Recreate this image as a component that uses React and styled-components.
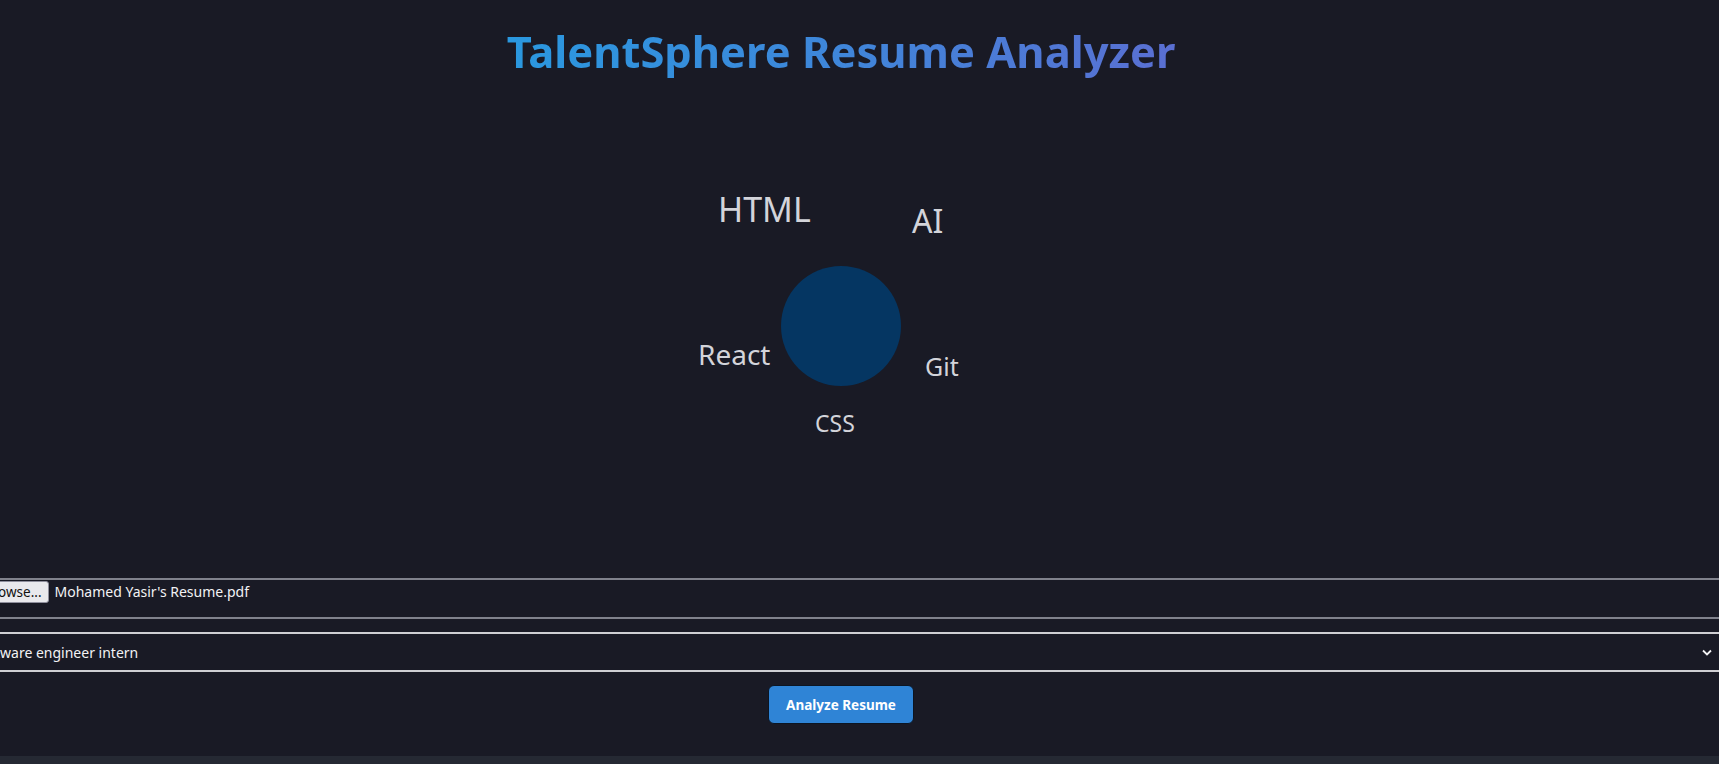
import React from "react";
import styled, { createGlobalStyle } from "styled-components";

const Global = createGlobalStyle`
  html, body {
    margin: 0;
    padding: 0;
    background: #252933;
    overflow: hidden;
  }
  body {
    font-family: "Noto Sans", "Open Sans", sans-serif;
  }
`;

const Page = styled.div`
  height: 756px;
  background: #191a25;
`;

const Main = styled.main`
  width: 1682px;
  display: flex;
  flex-direction: column;
  align-items: center;
`;

const Title = styled.h1`
  margin: 21px 0 0;
  font-size: 43.5px;
  font-weight: 700;
  line-height: normal;
  background: linear-gradient(90deg, #2a98df 0%, #3f86da 50%, #5a6fd2 100%);
  -webkit-background-clip: text;
  background-clip: text;
  color: transparent;
`;

const Stage = styled.div`
  position: relative;
  margin-top: 80px;
  width: 400px;
  height: 300px;
`;

const Core = styled.div`
  position: absolute;
  left: 140px;
  top: 105px;
  width: 120px;
  height: 120px;
  border-radius: 50%;
  background: #053662;
`;

const Skill = styled.span`
  position: absolute;
  line-height: 1;
  white-space: nowrap;
  color: #d3d4da;
  font-size: ${(p) => p.$size}px;
`;

const FormBlock = styled.div`
  align-self: stretch;
  margin: 117px -48px 0 -30px;
  display: flex;
  flex-direction: column;
  gap: 13px;
`;

const FileField = styled.div`
  height: 36px;
  border-top: 2px solid #80828c;
  border-bottom: 2px solid #80828c;
  display: flex;
  align-items: flex-start;
  gap: 6px;
  padding: 1px 0 0 7px;
  box-sizing: content-box;
`;

const BrowseButton = styled.button`
  height: 22px;
  padding: 0 6px;
  margin: 0;
  background: #e9e9ed;
  color: #111;
  border: 1px solid #8f8f9d;
  border-radius: 3px;
  font-family: "Noto Sans", sans-serif;
  font-size: 13.5px;
  line-height: 20px;
`;

const FileName = styled.span`
  color: #f2f2f4;
  font-size: 14px;
  line-height: 22px;
`;

const SelectBox = styled.div`
  height: 36px;
  border-top: 2px solid #cfcfd3;
  border-bottom: 2px solid #cfcfd3;
  display: flex;
  align-items: center;
  justify-content: space-between;
  padding: 0 18px 0 4px;
  color: #f2f2f4;
  font-size: 14px;
`;

const AnalyzeButton = styled.button`
  margin-top: 13px;
  width: 146px;
  height: 39px;
  background: #2f84d6;
  color: #fff;
  border: 1px solid #0c1522;
  border-radius: 6px;
  font-family: "Noto Sans", sans-serif;
  font-weight: 700;
  font-size: 13.5px;
`;

const skills = [
  { name: "HTML", size: 34, left: 77, top: 31 },
  { name: "AI", size: 32, left: 271, top: 44 },
  { name: "React", size: 28, left: 57, top: 179 },
  { name: "Git", size: 25, left: 284, top: 193 },
  { name: "CSS", size: 23, left: 174, top: 251 },
];

export default function App() {
  return (
    <>
      <Global />
      <Page>
        <Main>
          <Title>TalentSphere Resume Analyzer</Title>
          <Stage>
            <Core />
            {skills.map((s) => (
              <Skill key={s.name} $size={s.size} style={{ left: s.left, top: s.top }}>
                {s.name}
              </Skill>
            ))}
          </Stage>
          <FormBlock>
            <FileField>
              <BrowseButton>Browse...</BrowseButton>
              <FileName>Mohamed Yasir's Resume.pdf</FileName>
            </FileField>
            <SelectBox>
              <span>Software engineer intern</span>
              <svg width="10" height="7" viewBox="0 0 10 7">
                <path d="M1 1.5 L5 5.5 L9 1.5" fill="none" stroke="#f2f2f4" strokeWidth="1.8" />
              </svg>
            </SelectBox>
          </FormBlock>
          <AnalyzeButton>Analyze Resume</AnalyzeButton>
        </Main>
      </Page>
    </>
  );
}
